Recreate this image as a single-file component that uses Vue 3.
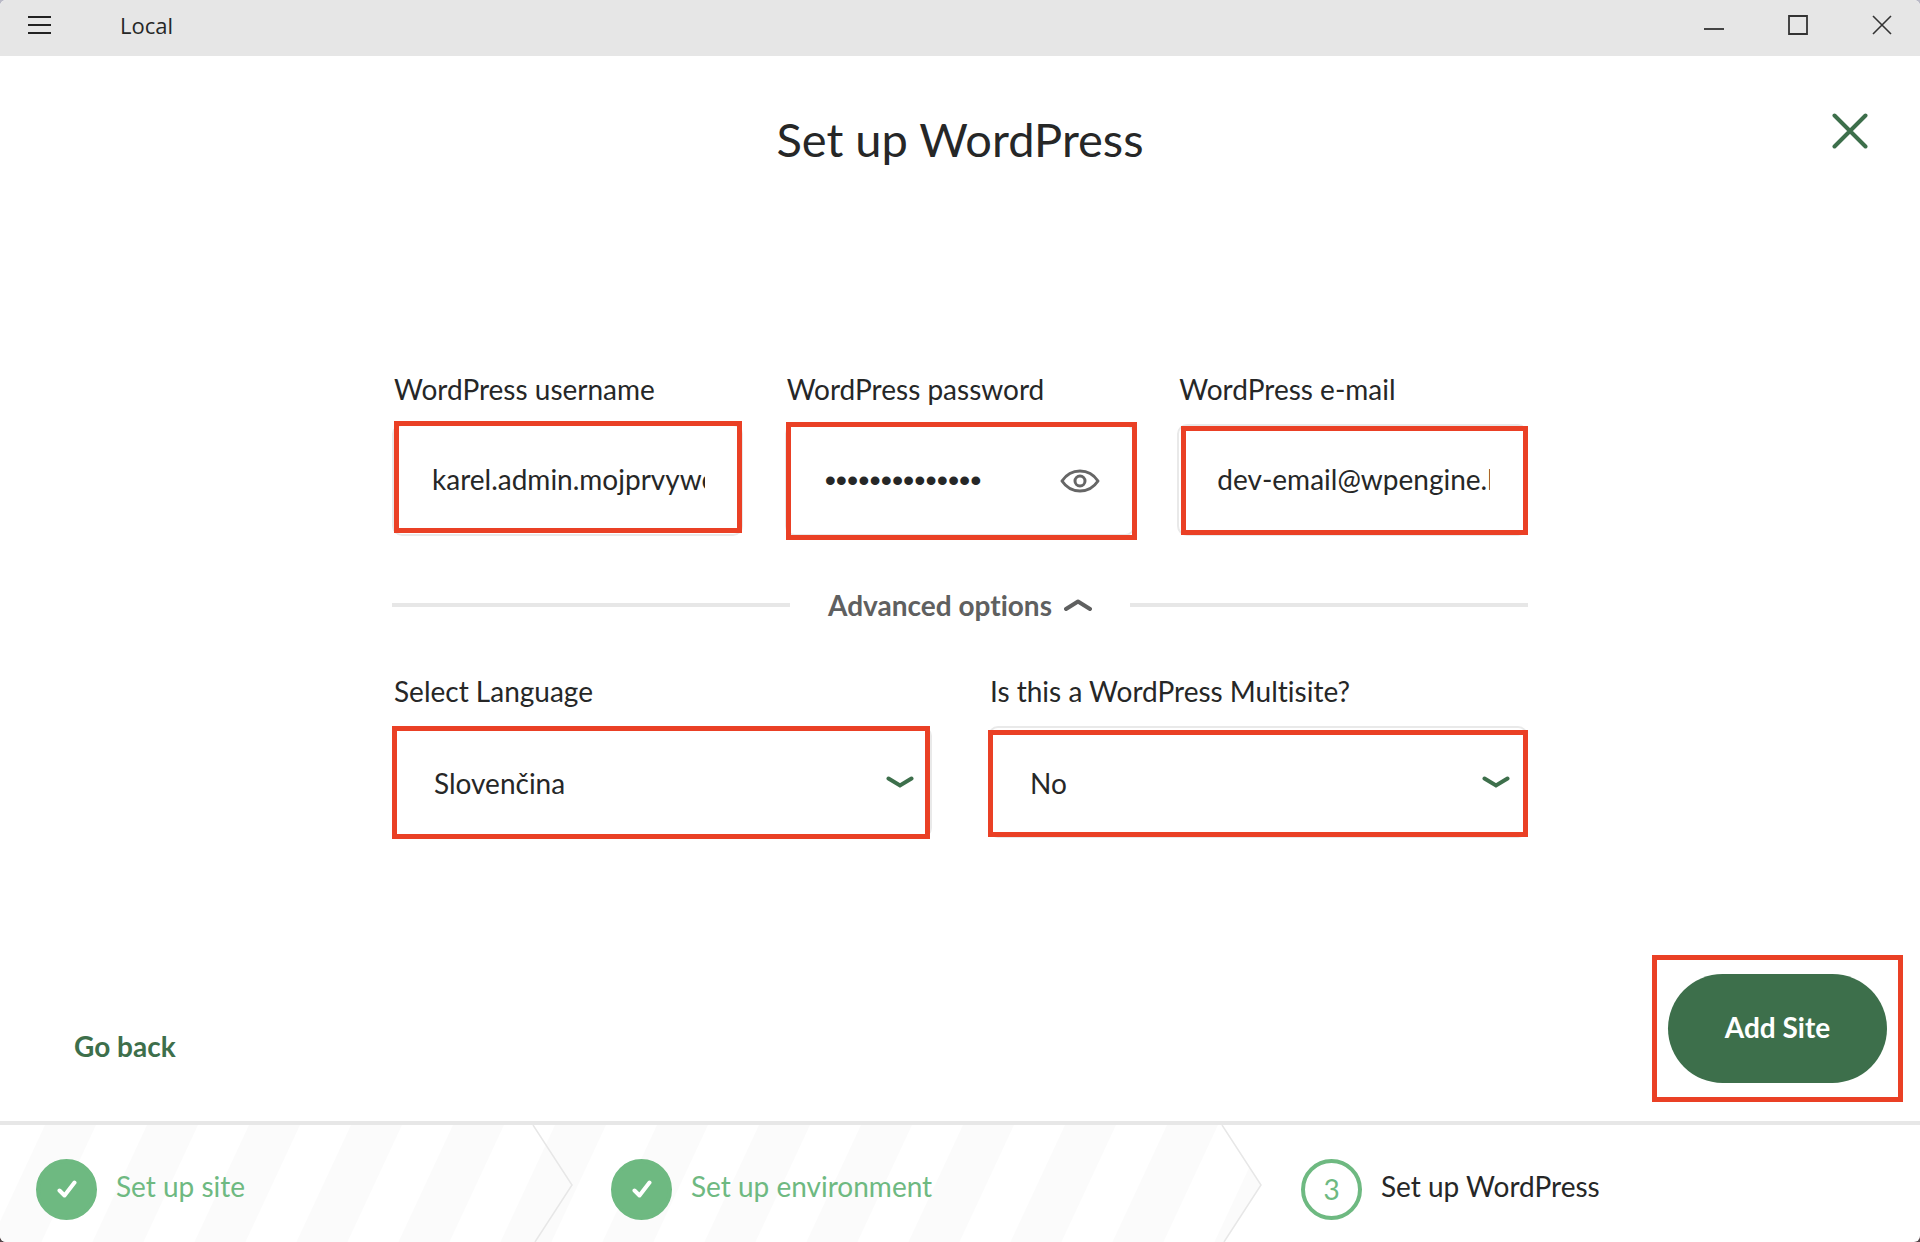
<script setup>
import { ref } from 'vue'

const username = ref('karel.admin.mojprvyweb')
const password = ref('localpassword1')
const email = ref('dev-email@wpengine.local')
const language = ref('Slovenčina')
const multisite = ref('No')
const showPassword = ref(false)
const advancedOpen = ref(true)

const steps = [
  { number: 1, label: 'Set up site', done: true },
  { number: 2, label: 'Set up environment', done: true },
  { number: 3, label: 'Set up WordPress', done: false },
]
</script>

<template>
  <div class="window">
    <header class="titlebar">
      <button class="bar-button" type="button" aria-label="Menu">
        <svg width="23" height="20" viewBox="0 0 23 20" fill="none" stroke="#222" stroke-width="2">
          <path d="M0 2H23M0 10H23M0 18H23" />
        </svg>
      </button>
      <span class="app-name">Local</span>
      <div class="window-controls">
        <button class="bar-button" type="button" aria-label="Minimize">
          <svg width="20" height="20" viewBox="0 0 20 20" fill="none" stroke="#444" stroke-width="2">
            <path d="M0 14H20" />
          </svg>
        </button>
        <button class="bar-button" type="button" aria-label="Maximize">
          <svg width="20" height="20" viewBox="0 0 20 20" fill="none" stroke="#333" stroke-width="1.800">
            <path d="M1 1H19V19H1Z" />
          </svg>
        </button>
        <button class="bar-button" type="button" aria-label="Close window">
          <svg width="20" height="20" viewBox="0 0 20 20" fill="none" stroke="#333" stroke-width="1.600">
            <path d="M1 1L19 19M19 1L1 19" />
          </svg>
        </button>
      </div>
    </header>

    <main class="content">
      <button class="close" type="button" aria-label="Close">
        <svg width="36" height="36" viewBox="0 0 36 36" fill="none" stroke="#3d6f4b" stroke-width="4" stroke-linecap="round">
          <path d="M2.500 2.500L33.500 33.500M33.500 2.500L2.500 33.500" />
        </svg>
      </button>

      <h1>Set up WordPress</h1>

      <form class="form" @submit.prevent>
        <div class="row credentials">
          <div class="field">
            <label for="username">WordPress username</label>
            <div class="control">
              <input id="username" v-model="username" type="text" />
              <span class="mark mark-username"></span>
            </div>
          </div>
          <div class="field">
            <label for="password">WordPress password</label>
            <div class="control">
              <input id="password" v-model="password" class="secret" :type="showPassword ? 'text' : 'password'" />
              <button class="reveal" type="button" aria-label="Show password" @click="showPassword = !showPassword">
                <svg width="40" height="26" viewBox="0 0 40 26" fill="none" stroke="#666" stroke-width="3">
                  <path d="M2 14C6 8 12 4 20 4S34 8 38 14C34 20 28 24 20 24S6 20 2 14Z" stroke-linejoin="round" />
                  <circle cx="20" cy="14" r="5" />
                </svg>
              </button>
              <span class="mark mark-password"></span>
            </div>
          </div>
          <div class="field">
            <label for="email">WordPress e-mail</label>
            <div class="control">
              <input id="email" v-model="email" type="email" />
              <span class="mark mark-email"></span>
            </div>
          </div>
        </div>

        <div class="divider">
          <button class="advanced" type="button" :aria-expanded="advancedOpen" @click="advancedOpen = !advancedOpen">
            Advanced options
            <svg width="28" height="12" viewBox="0 0 28 12" fill="none" stroke="#5f6060" stroke-width="4" stroke-linecap="round" stroke-linejoin="round">
              <path d="M2 10L14 2.500L26 10" />
            </svg>
          </button>
        </div>

        <div v-if="advancedOpen" class="row options">
          <div class="field">
            <label for="language">Select Language</label>
            <div class="control">
              <select id="language" v-model="language">
                <option>Slovenčina</option>
                <option>English</option>
              </select>
              <svg class="arrow" width="28" height="12" viewBox="0 0 28 12" fill="none" stroke="#3d6f4b" stroke-width="4" stroke-linecap="round">
                <path d="M2.500 2.500L14 9.500L25.500 2.500" />
              </svg>
              <span class="mark mark-language"></span>
            </div>
          </div>
          <div class="field">
            <label for="multisite">Is this a WordPress Multisite?</label>
            <div class="control">
              <select id="multisite" v-model="multisite">
                <option>No</option>
                <option>Yes</option>
              </select>
              <svg class="arrow" width="28" height="12" viewBox="0 0 28 12" fill="none" stroke="#3d6f4b" stroke-width="4" stroke-linecap="round">
                <path d="M2.500 2.500L14 9.500L25.500 2.500" />
              </svg>
              <span class="mark mark-multisite"></span>
            </div>
          </div>
        </div>
      </form>

      <div class="actions">
        <button class="back" type="button">Go back</button>
        <div class="submit">
          <button class="primary" type="button">Add Site</button>
          <span class="mark mark-submit"></span>
        </div>
      </div>
    </main>

    <nav class="stepper" aria-label="Progress">
      <svg class="stripes" viewBox="0 0 1920 117" preserveAspectRatio="none">
        <defs>
          <pattern id="stripe" x="45" width="102" height="117" patternUnits="userSpaceOnUse" patternTransform="skewX(-25)">
            <rect width="51" height="117" fill="#fbfbfb" />
          </pattern>
        </defs>
        <path d="M0 0H1222L1261 60L1224 117H0Z" fill="url(#stripe)" />
        <path d="M533 0L572 60L535 117M1222 0L1261 60L1224 117" fill="none" stroke="#e7e7e7" stroke-width="1.500" />
      </svg>
      <ol>
        <li v-for="step in steps" :key="step.number" :class="{ done: step.done }">
          <span class="badge">
            <svg v-if="step.done" width="20" height="18" viewBox="0 0 20 18" fill="none" stroke="#fff" stroke-width="4" stroke-linecap="round" stroke-linejoin="round">
              <path d="M2.500 10.500L7.500 15.500L17.500 2.500" />
            </svg>
            <template v-else>{{ step.number }}</template>
          </span>
          <span class="step-label">{{ step.label }}</span>
        </li>
      </ol>
    </nav>
  </div>
</template>

<style>
html {
  background: linear-gradient(#b9b9c6, #54464a);
}
body {
  margin: 0;
}
</style>

<style scoped>
.window {
  display: flex;
  flex-direction: column;
  min-height: 100vh;
  overflow: hidden;
  border-radius: 6px;
  background: #fff;
  color: #262727;
  font-family: Lato, "Noto Sans", sans-serif;
  font-size: 28px;
  font-variant-ligatures: none;
  line-height: 32px;
}
.window *,
.window {
  box-sizing: border-box;
}
svg {
  display: block;
}
button {
  padding: 0;
  border: 0;
  background: none;
  color: inherit;
  font: inherit;
  font-variant-ligatures: none;
  cursor: pointer;
}

.titlebar {
  display: flex;
  align-items: center;
  height: 56px;
  padding: 0 28px 6px;
  background: #e6e6e6;
}
.app-name {
  margin-left: 69px;
  font-family: "Open Sans", "Noto Sans", sans-serif;
  font-size: 22px;
}
.window-controls {
  display: flex;
  gap: 64px;
  margin-left: auto;
}

.content {
  position: relative;
  display: flex;
  flex: 1;
  flex-direction: column;
}
.close {
  position: absolute;
  top: 57px;
  right: 52px;
}
h1 {
  margin: 55px 0 0;
  font-size: 47px;
  font-weight: 400;
  line-height: 56px;
  text-align: center;
}

.form {
  width: 1136px;
  max-width: 100%;
  margin: 206px auto 48px;
}
.row {
  display: grid;
}
.credentials {
  grid-template-columns: repeat(3, 1fr);
  gap: 42px;
}
.options {
  grid-template-columns: repeat(2, 1fr);
  gap: 56px;
}
.field {
  display: flex;
  flex-direction: column;
  gap: 19px;
  min-width: 0;
}
label {
  padding-left: 2px;
}
.control {
  position: relative;
}
input,
select {
  display: block;
  width: 100%;
  height: 112px;
  padding: 0 36px 2px 38px;
  border: 2px solid #e9e9e9;
  border-radius: 10px;
  outline: 0;
  background: #fff;
  color: inherit;
  font: inherit;
  appearance: none;
}
select {
  padding: 1px 40px 0;
}
.secret[type="password"] {
  padding-bottom: 0;
  font-family: "Liberation Sans", Arial, sans-serif;
  font-size: 32px;
}
.reveal,
.arrow {
  position: absolute;
  top: 50%;
  transform: translateY(-50%);
}
.reveal {
  right: 35px;
}
.arrow {
  right: 18px;
  pointer-events: none;
}

.mark {
  position: absolute;
  border: 5px solid #ea4025;
  pointer-events: none;
}
.mark-username {
  inset: -3px 1px 3px 2px;
}
.mark-password {
  inset: -2px -2px -4px 1px;
}
.mark-email {
  inset: 2px 0 1px 4px;
}
.mark-language {
  inset: 0 2px -1px 0;
}
.mark-multisite {
  inset: 4px 0 1px;
}
.mark-submit {
  inset: -19px -16px;
}

.divider {
  display: flex;
  align-items: center;
  gap: 38px;
  margin: 53px 0 54px;
}
.divider::before,
.divider::after {
  flex: 1;
  height: 4px;
  background: #e7e7e7;
  content: "";
}
.advanced {
  display: flex;
  align-items: center;
  gap: 12px;
  color: #5f6060;
  font-weight: 700;
}

.actions {
  display: flex;
  align-items: flex-end;
  justify-content: space-between;
  margin-top: auto;
  padding: 0 33px 38px 74px;
}
.back {
  margin-bottom: 21px;
  color: #3d6f4b;
  font-weight: 700;
}
.submit {
  position: relative;
}
.primary {
  width: 219px;
  height: 109px;
  padding-bottom: 4px;
  border-radius: 56px;
  background: #3d6f4b;
  color: #fff;
  font-weight: 700;
}

.stepper {
  position: relative;
  border-top: 4px solid #e7e7e7;
}
.stripes {
  position: absolute;
  inset: 0;
  width: 100%;
  height: 100%;
}
ol {
  position: relative;
  display: grid;
  grid-template-columns: 575fr 690fr 655fr;
  height: 117px;
  margin: 0;
  padding: 0;
  list-style: none;
}
li {
  display: flex;
  align-items: center;
  gap: 19px;
  padding: 11px 0 0 36px;
}
.done {
  color: #6eb981;
}
.badge {
  display: flex;
  align-items: center;
  justify-content: center;
  width: 61px;
  height: 61px;
  border: 4px solid #6eb981;
  border-radius: 50%;
  color: #6eb981;
}
.done .badge {
  background: #6eb981;
}
.step-label {
  padding-bottom: 6px;
}
</style>
